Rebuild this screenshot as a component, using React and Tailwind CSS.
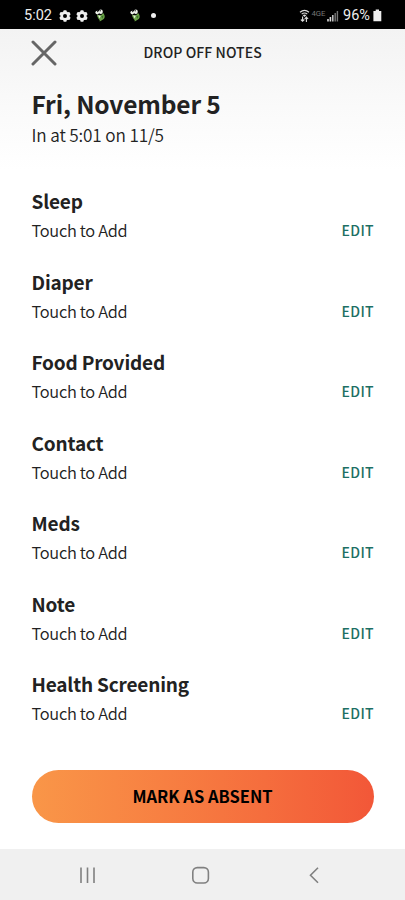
const sections = ['Sleep', 'Diaper', 'Food Provided', 'Contact', 'Meds', 'Note', 'Health Screening'];

function Gear() {
  return (
    <svg width="12" height="12" viewBox="0 0 12 12" className="shrink-0">
      <g fill="#eee">
        <circle cx="6" cy="6" r="4.7" />
        {[0, 60, 120].map((a) => (
          <rect key={a} x="4.4" y="0.2" width="3.2" height="11.6" rx="0.7" transform={`rotate(${a} 6 6)`} />
        ))}
      </g>
      <circle cx="6" cy="6" r="2" fill="#000" />
    </svg>
  );
}

function Bug() {
  return (
    <svg width="10" height="13" viewBox="0 0 10 13" className="shrink-0">
      <path d="M2 5.5 C4 7 7 6.5 8 4 C10.3 6 10.2 9 8 10.5 C6.8 11.4 6 11.8 4.6 12.6 C5.2 11 4 10.6 3.2 9.2 C2.5 8 2 6.8 2 5.5Z" fill="#6ba348" />
      <path d="M6.2 7.5 L8.6 6.3 L7.6 9.7Z" fill="#3a7028" />
      <ellipse cx="2.3" cy="3.6" rx="1.9" ry="1.8" fill="#f0f4ec" />
      <ellipse cx="5.8" cy="2.8" rx="2" ry="2.3" fill="#f0f4ec" />
      <circle cx="2.6" cy="2.6" r="0.7" fill="#222" />
      <circle cx="5.2" cy="1.8" r="0.7" fill="#222" />
      <path d="M3 6.2 L5.8 6.8 L4.6 9.4Z" fill="#e4f2d8" />
    </svg>
  );
}

function StatusBar() {
  return (
    <div className="flex h-[29px] shrink-0 items-center bg-black pt-[2px] pl-[24px] font-['Roboto',sans-serif] text-[14.5px] text-[#eee]">
      <span className="w-[35px]">5:02</span>
      <span className="flex w-[36px] gap-[5px]"><Gear /><Gear /></span>
      <span className="w-[35px]"><Bug /></span>
      <span className="w-[20.5px]"><Bug /></span>
      <span className="h-[5px] w-[5px] rounded-full bg-[#eee]" />
      <svg width="44" height="14" viewBox="0 0 44 14" className="ml-[143.5px] shrink-0">
        <g fill="none" stroke="#ddd" strokeWidth="1.2">
          <path d="M1 3.2 Q5.5 -0.4 10 3.2" />
          <path d="M2.7 5.1 Q5.5 2.9 8.3 5.1" />
        </g>
        <path d="M3.7 6.2 Q5.5 5 7.3 6.2 L5.5 8Z" fill="#ddd" />
        <path d="M3.6 7.5 V12 M1.9 10.5 L3.6 12.3 L5.3 10.5 M7.4 13 V8.3 M5.7 10 L7.4 8 L9.1 10" fill="none" stroke="#ddd" strokeWidth="1.1" />
        <text x="12.5" y="6.5" fontSize="7" fill="#777" textLength="14" lengthAdjust="spacingAndGlyphs">4GE</text>
        <path d="M29 12.5 V10 M31.4 12.5 V8" stroke="#ddd" strokeWidth="1.6" />
        <path d="M33.8 12.5 V6" stroke="#bbb" strokeWidth="1.6" />
        <path d="M36.2 12.5 V4 M38.4 12.5 V2" stroke="#777" strokeWidth="1.4" />
      </svg>
      <span className="w-[29.5px] whitespace-nowrap">96%</span>
      <svg width="9" height="13" viewBox="0 0 9 13" className="shrink-0">
        <path d="M2.7 0.5 H6 V2 H8.3 V12.3 H0.4 V2 H2.7Z" fill="#eee" />
      </svg>
    </div>
  );
}

export default function App() {
  return (
    <div className="flex h-[900px] w-[405px] flex-col overflow-hidden bg-white font-['Noto_Sans_CJK_SC',sans-serif] text-[#222]">
      <StatusBar />
      <div className="flex h-[156px] shrink-0 flex-col bg-linear-to-b from-[#f3f3f3] via-[#fafafa] to-white to-90%">
        <header className="flex h-[46px] items-center pl-[31px]">
          <svg width="26" height="26" viewBox="0 0 26 26" className="mt-px shrink-0">
            <path d="M2 2 L24 24 M24 2 L2 24" stroke="#666" strokeWidth="3" strokeLinecap="round" />
          </svg>
          <h1 className="ml-[86.5px] text-[14px] leading-[20px] font-medium tracking-[0.08px] whitespace-nowrap">DROP OFF NOTES</h1>
        </header>
        <div className="px-[31.5px] pt-[13px]">
          <h2 className="text-[24.5px] leading-[32px] font-bold tracking-[-0.15px] whitespace-nowrap">Fri, November 5</h2>
          <p className="pt-px text-[17.2px] leading-[28px] font-[350] tracking-[-0.15px] whitespace-nowrap">In at 5:01 on 11/5</p>
        </div>
      </div>
      <main className="flex flex-1 flex-col">
        {sections.map((name) => (
          <section key={name} className="h-[80.5px] shrink-0 px-[31.5px]">
            <h3 className="h-[31px] text-[19px] leading-[31px] font-bold tracking-[-0.18px]">{name}</h3>
            <div className="flex h-[28px] items-center justify-between">
              <span className="text-[16.4px] leading-[28px] font-[350] tracking-[-0.3px]">Touch to Add</span>
              <button className="mt-[1px] -mr-[0.5px] text-[14px] leading-[29px] font-medium tracking-[0.35px] text-[#1d6f64]">EDIT</button>
            </div>
          </section>
        ))}
        <button className="mx-[31.5px] mt-[21.5px] h-[53px] shrink-0 rounded-full bg-linear-to-r from-[#f99648] to-[#f25738] text-[16.5px] font-bold text-black">MARK AS ABSENT</button>
      </main>
      <nav className="flex h-[51px] shrink-0 items-center bg-[#f0f0f0]">
        <svg width="405" height="51" viewBox="0 0 405 51" fill="none" stroke="#808080" strokeWidth="1.6">
          <path d="M81 18.5 V34 M87.5 18.5 V34 M94 18.5 V34" />
          <rect x="192.8" y="18.6" width="15.6" height="15.4" rx="4.5" />
          <path d="M318 18.8 L310.5 26.3 L318 33.8" />
        </svg>
      </nav>
    </div>
  );
}
